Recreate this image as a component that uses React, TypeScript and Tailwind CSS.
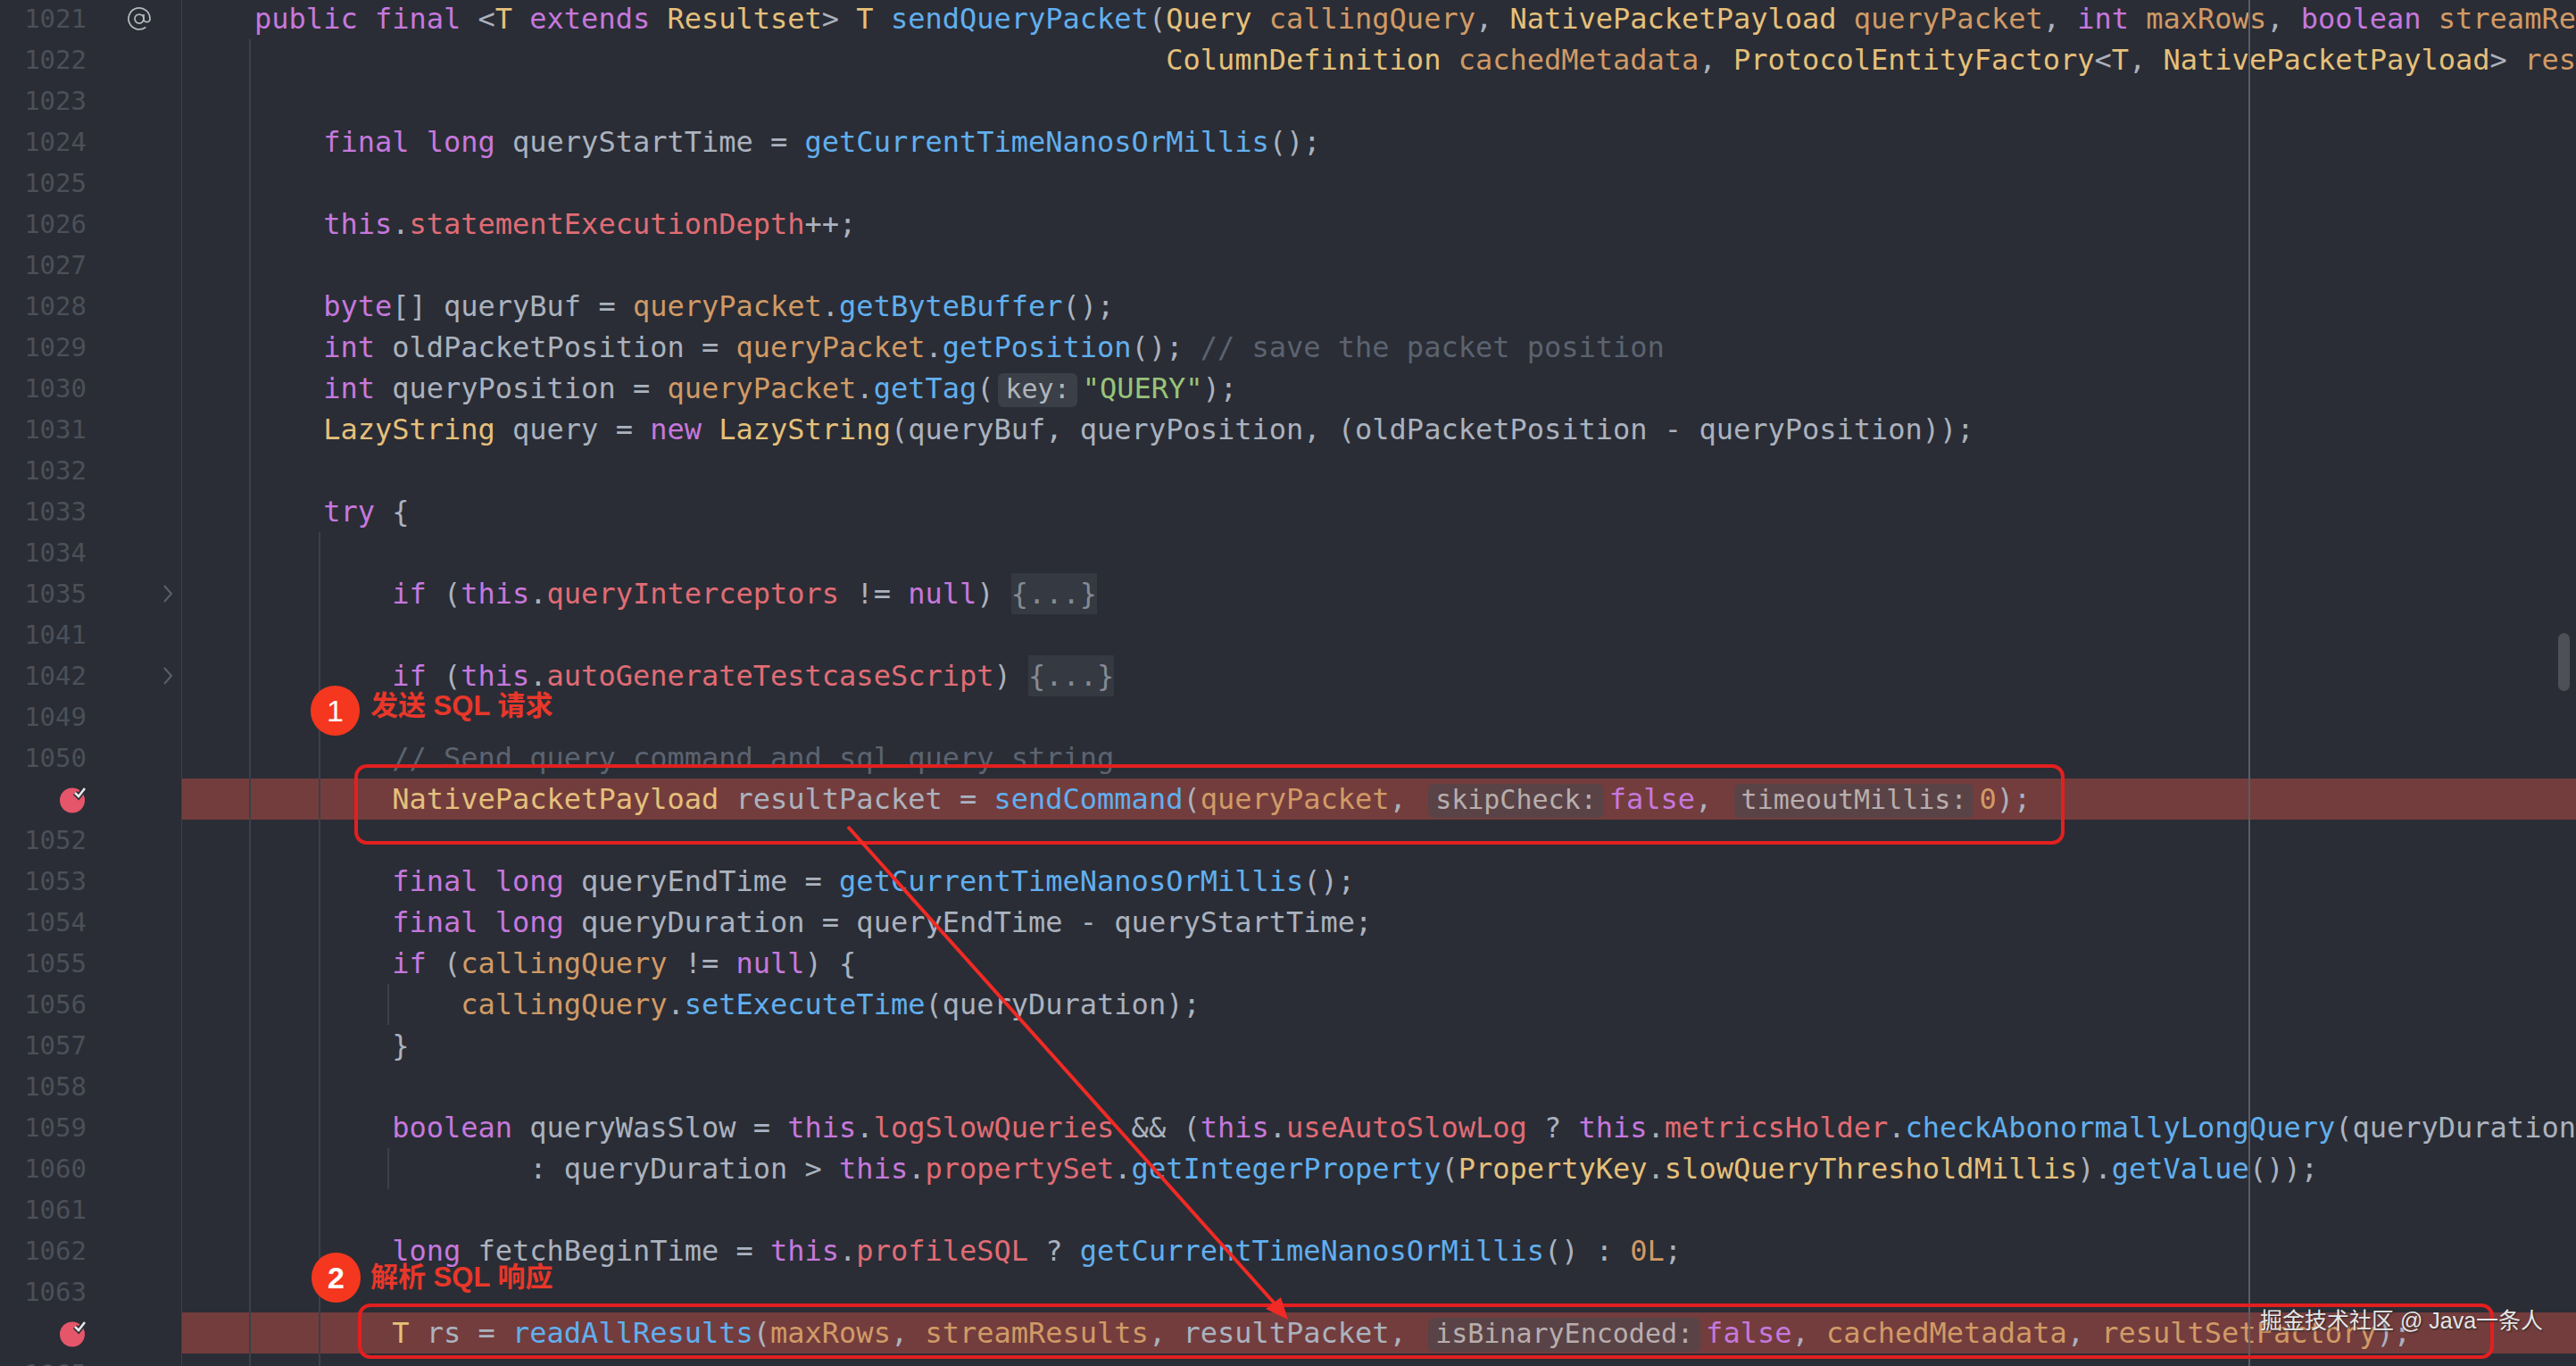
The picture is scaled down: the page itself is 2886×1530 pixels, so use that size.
const K = "text-[#c678dd]";
const T = "text-[#e5c07b]";
const V = "text-[#d19a66]";
const M = "text-[#61afef]";
const F = "text-[#e06c75]";
const P = "text-[#abb2bf]";
const S = "text-[#98c379]";
const C = "text-[#5c6370]";

type Seg = [string, string];

interface Line {
  n: number;
  segs?: (Seg | { hint: string } | { fold: string })[];
  mark?: "at" | "fold" | "bp";
  hl?: boolean;
}

const LINES: Line[] = [
  {
    n: 1021,
    mark: "at",
    segs: [
      [K, "    public final "], [P, "<"], [T, "T "], [K, "extends "], [T, "Resultset"], [P, "> "], [T, "T "],
      [M, "sendQueryPacket"], [P, "("], [T, "Query "], [V, "callingQuery"], [P, ", "], [T, "NativePacketPayload "],
      [V, "queryPacket"], [P, ", "], [K, "int "], [V, "maxRows"], [P, ", "], [K, "boolean "], [V, "streamResults"], [P, ","],
    ],
  },
  {
    n: 1022,
    segs: [
      [P, "                                                         "], [T, "ColumnDefinition "], [V, "cachedMetadata"], [P, ", "],
      [T, "ProtocolEntityFactory"], [P, "<"], [T, "T"], [P, ", "], [T, "NativePacketPayload"], [P, "> "], [V, "resultSetFactory"], [P, ")"],
    ],
  },
  { n: 1023 },
  { n: 1024, segs: [[K, "        final long "], [P, "queryStartTime = "], [M, "getCurrentTimeNanosOrMillis"], [P, "();"]] },
  { n: 1025 },
  { n: 1026, segs: [[K, "        this"], [P, "."], [F, "statementExecutionDepth"], [P, "++;"]] },
  { n: 1027 },
  { n: 1028, segs: [[K, "        byte"], [P, "[] queryBuf = "], [V, "queryPacket"], [P, "."], [M, "getByteBuffer"], [P, "();"]] },
  {
    n: 1029,
    segs: [[K, "        int "], [P, "oldPacketPosition = "], [V, "queryPacket"], [P, "."], [M, "getPosition"], [P, "(); "], [C, "// save the packet position"]],
  },
  {
    n: 1030,
    segs: [[K, "        int "], [P, "queryPosition = "], [V, "queryPacket"], [P, "."], [M, "getTag"], [P, "("], { hint: "key:" }, [S, "\"QUERY\""], [P, ");"]],
  },
  {
    n: 1031,
    segs: [[T, "        LazyString "], [P, "query = "], [K, "new "], [T, "LazyString"], [P, "(queryBuf, queryPosition, (oldPacketPosition - queryPosition));"]],
  },
  { n: 1032 },
  { n: 1033, segs: [[K, "        try "], [P, "{"]] },
  { n: 1034 },
  {
    n: 1035,
    mark: "fold",
    segs: [[K, "            if "], [P, "("], [K, "this"], [P, "."], [F, "queryInterceptors"], [P, " != "], [K, "null"], [P, ") "], { fold: "{...}" }],
  },
  { n: 1041 },
  {
    n: 1042,
    mark: "fold",
    segs: [[K, "            if "], [P, "("], [K, "this"], [P, "."], [F, "autoGenerateTestcaseScript"], [P, ") "], { fold: "{...}" }],
  },
  { n: 1049 },
  { n: 1050, segs: [[C, "            // Send query command and sql query string"]] },
  {
    n: 1051,
    mark: "bp",
    hl: true,
    segs: [
      [T, "            NativePacketPayload "], [P, "resultPacket = "], [M, "sendCommand"], [P, "("], [V, "queryPacket"], [P, ", "],
      { hint: "skipCheck:" }, [K, "false"], [P, ", "], { hint: "timeoutMillis:" }, [V, "0"], [P, ");"],
    ],
  },
  { n: 1052 },
  { n: 1053, segs: [[K, "            final long "], [P, "queryEndTime = "], [M, "getCurrentTimeNanosOrMillis"], [P, "();"]] },
  { n: 1054, segs: [[K, "            final long "], [P, "queryDuration = queryEndTime - queryStartTime;"]] },
  { n: 1055, segs: [[K, "            if "], [P, "("], [V, "callingQuery"], [P, " != "], [K, "null"], [P, ") {"]] },
  { n: 1056, segs: [[V, "                callingQuery"], [P, "."], [M, "setExecuteTime"], [P, "(queryDuration);"]] },
  { n: 1057, segs: [[P, "            }"]] },
  { n: 1058 },
  {
    n: 1059,
    segs: [
      [K, "            boolean "], [P, "queryWasSlow = "], [K, "this"], [P, "."], [F, "logSlowQueries"], [P, " && ("], [K, "this"], [P, "."],
      [F, "useAutoSlowLog"], [P, " ? "], [K, "this"], [P, "."], [F, "metricsHolder"], [P, "."], [M, "checkAbonormallyLongQuery"], [P, "(queryDuration)"],
    ],
  },
  {
    n: 1060,
    segs: [
      [P, "                    : queryDuration > "], [K, "this"], [P, "."], [F, "propertySet"], [P, "."], [M, "getIntegerProperty"], [P, "("],
      [T, "PropertyKey"], [P, "."], [T, "slowQueryThresholdMillis"], [P, ")."], [M, "getValue"], [P, "());"],
    ],
  },
  { n: 1061 },
  {
    n: 1062,
    segs: [
      [K, "            long "], [P, "fetchBeginTime = "], [K, "this"], [P, "."], [F, "profileSQL"], [P, " ? "], [M, "getCurrentTimeNanosOrMillis"],
      [P, "() : "], [V, "0L"], [P, ";"],
    ],
  },
  { n: 1063 },
  {
    n: 1064,
    mark: "bp",
    hl: true,
    segs: [
      [T, "            T "], [P, "rs = "], [M, "readAllResults"], [P, "("], [V, "maxRows"], [P, ", "], [V, "streamResults"], [P, ", resultPacket, "],
      { hint: "isBinaryEncoded:" }, [K, "false"], [P, ", "], [V, "cachedMetadata"], [P, ", "], [V, "resultSetFactory"], [P, ");"],
    ],
  },
  { n: 1065 },
];

function Breakpoint() {
  return (
    <svg width="30" height="32" viewBox="0 0 30 32" className="block">
      <circle cx="14" cy="17.5" r="14" fill="#e5566b" />
      <path d="M17 9l4 4 7-9" fill="none" stroke="#2a2d35" strokeWidth="6" />
      <path d="M17 9l4 4 7-9" fill="none" stroke="#e8e8e8" strokeWidth="2.6" />
    </svg>
  );
}

function Gutter({ line }: { line: Line }) {
  return (
    <div className="flex items-center w-[203px] h-full shrink-0 bg-[#2a2d35] border-r border-[#3c4049] box-content">
      <div
        className={`w-[97px] shrink-0 flex justify-end text-right text-[29px] text-[#4b5059] ${
          line.mark === "bp" ? "" : "pt-[2px]"
        }`}
      >
        {line.mark === "bp" ? <Breakpoint /> : line.n}
      </div>
      <div className="ml-[42px] w-[34px] shrink-0 flex justify-center">
        {line.mark === "at" && (
          <svg width="30" height="34" viewBox="0 0 24 24" fill="none" stroke="#b4b8bf" strokeWidth="1.4">
            <circle cx="12" cy="12" r="4" />
            <path d="M16 8v5a3 3 0 0 0 5.6 0V12a9.6 9.6 0 1 0-3.8 7.6" />
          </svg>
        )}
      </div>
      <div className="w-[30px] shrink-0 flex justify-center">
        {line.mark === "fold" && (
          <svg width="12" height="24" viewBox="0 0 12 24" fill="none" stroke="#5c6068" strokeWidth="2">
            <path d="M2 3l8 9-8 9" />
          </svg>
        )}
      </div>
    </div>
  );
}

function Row({ line }: { line: Line }) {
  return (
    <div className={`flex h-[46px] ${line.hl ? "bg-[#733d3d]" : ""}`}>
      <Gutter line={line} />
      <div className="flex-1 min-w-0 pl-[4px] overflow-hidden whitespace-pre leading-[46px]">
        {(line.segs || []).map((seg, i) => {
          if (Array.isArray(seg)) {
            return (
              <span key={i} className={seg[0]}>
                {seg[1]}
              </span>
            );
          }
          if ("hint" in seg) {
            return (
              <span
                key={i}
                className={`inline-block align-middle h-[38px] leading-[35px] ml-[5px] px-[8px] rounded-md text-[30px] ${
                  line.hl ? "mr-[6px] bg-[#5a4346] text-[#b8aeae]" : "mr-[6px] bg-[#3a3f48] text-[#b0b5bc]"
                }`}
              >
                {seg.hint}
              </span>
            );
          }
          return (
            <span key={i} className="inline-block h-[46px] bg-[#343942] text-[#858a93]">
              {seg.fold}
            </span>
          );
        })}
      </div>
    </div>
  );
}

export default function App() {
  return (
    <div className="relative h-[1530px] w-full overflow-hidden bg-[#2a2d35] font-['DejaVu_Sans_Mono',monospace] text-[32px]">
      <div className="-mt-[2px]">
        {LINES.map((line) => (
          <Row key={line.n} line={line} />
        ))}
      </div>

      {/* indent guides + right margin */}
      <div className="absolute left-[279px] top-[44px] bottom-0 w-[2px] bg-[#3c4049]" />
      <div className="absolute left-[357px] top-[596px] bottom-0 w-[2px] bg-[#3c4049]" />
      <div className="absolute left-[434px] top-[1102px] h-[46px] w-[2px] bg-[#3c4049]" />
      <div className="absolute left-[434px] top-[1286px] h-[46px] w-[2px] bg-[#3c4049]" />
      <div className="absolute left-[2519px] top-0 bottom-0 w-[2px] bg-[#5a5d64]" />

      {/* scrollbar */}
      <div className="absolute left-[2866px] top-[709px] h-[65px] w-[13px] rounded-full bg-[#4d5056]" />

      {/* annotations */}
      <div className="absolute left-[397px] top-[856px] h-[90px] w-[1916px] rounded-[14px] border-[4px] border-[#e2201f]" />
      <div className="absolute left-[401px] top-[1460px] h-[62px] w-[2393px] rounded-[14px] border-[4px] border-[#e2201f]" />

      <svg className="absolute inset-0" width="2886" height="1530" viewBox="0 0 2886 1530">
        <line x1="950" y1="926" x2="1428" y2="1460" stroke="#f02a25" strokeWidth="4" />
        <path d="M1443 1478L1418 1466L1435 1453Z" fill="#f02a25" />
      </svg>

      <div className="absolute left-[348px] top-[768px] flex h-[56px] w-[55px] items-center justify-center rounded-full bg-[#f5371f] font-['Liberation_Sans',sans-serif] text-[34px] text-white">
        1
      </div>
      <div className="absolute left-[415px] top-[769px] whitespace-pre font-['Liberation_Sans','Noto_Sans_CJK_SC',sans-serif] text-[31px] font-bold leading-[44px] text-[#e8372a]">
        发送 SQL 请求
      </div>
      <div className="absolute left-[349px] top-[1403px] flex h-[56px] w-[55px] items-center justify-center rounded-full bg-[#f5371f] font-['Liberation_Sans',sans-serif] text-[34px] font-bold text-white">
        2
      </div>
      <div className="absolute left-[415px] top-[1409px] whitespace-pre font-['Liberation_Sans','Noto_Sans_CJK_SC',sans-serif] text-[31px] font-bold leading-[44px] text-[#e8372a]">
        解析 SQL 响应
      </div>

      {/* watermark */}
      <div className="absolute left-[2532px] top-[1461px] whitespace-pre font-['Liberation_Sans','Noto_Sans_CJK_SC',sans-serif] text-[25px] leading-[36px] text-[#e6e6e6] [text-shadow:1px_1px_2px_#222]">
        掘金技术社区 @ Java一条人
      </div>
    </div>
  );
}
